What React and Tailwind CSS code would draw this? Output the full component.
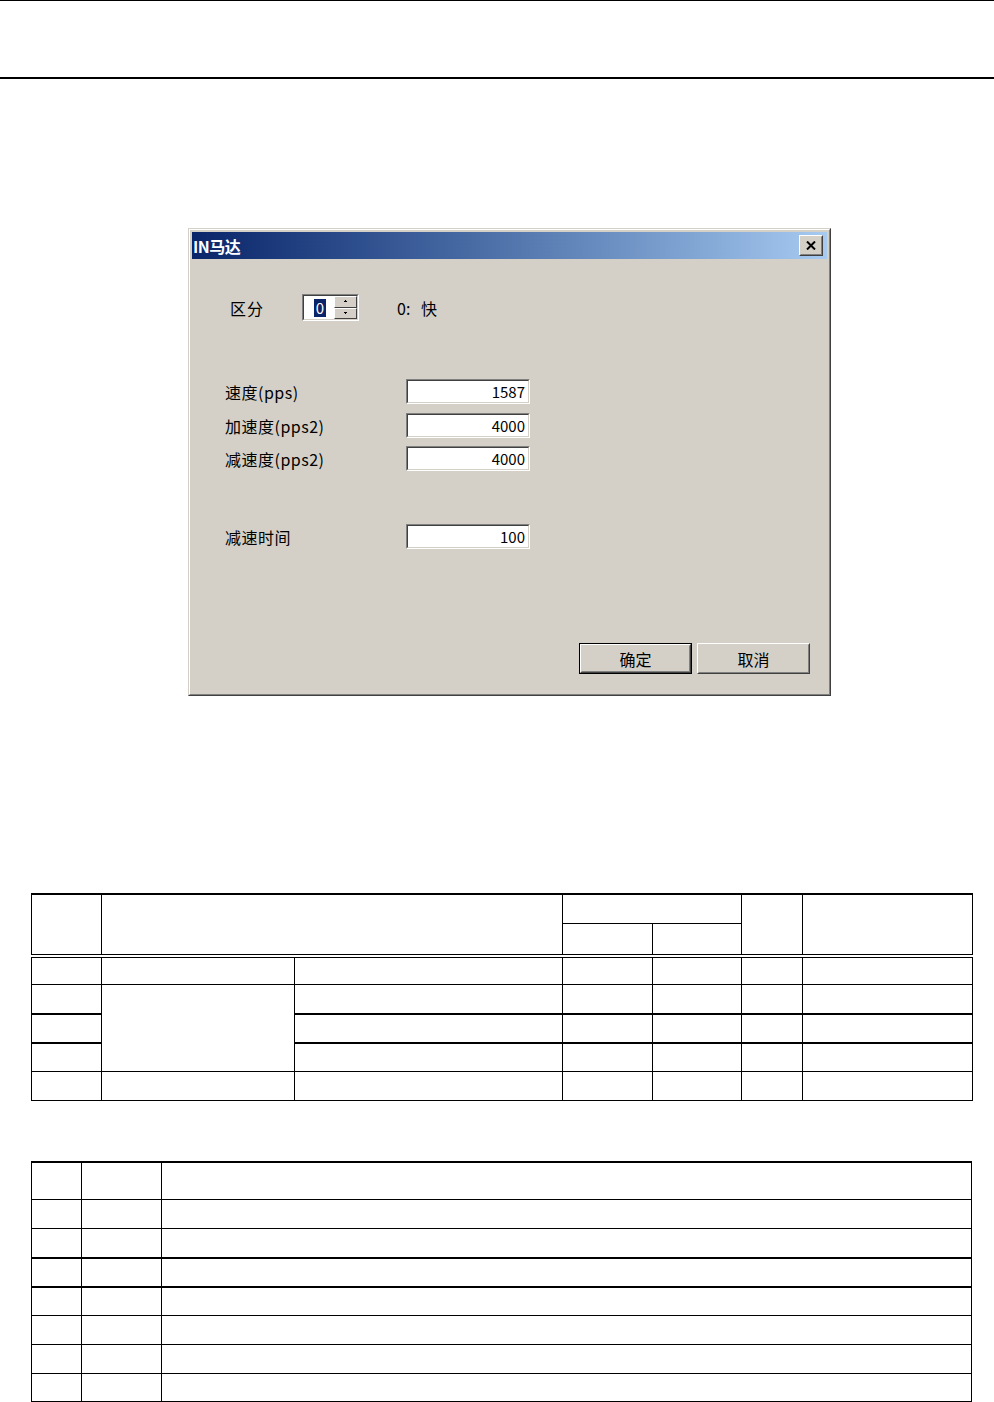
import React from 'react';

const font = { fontFamily: '"Noto Sans CJK SC", "Liberation Sans", sans-serif' };

// Windows classic sunken field
const Sunken = ({ className = '', children }) => (
  <div className={`border border-t-[#808080] border-l-[#808080] border-b-white border-r-white ${className}`}>
    <div className="h-full border border-t-[#404040] border-l-[#404040] border-b-[#d4d0c8] border-r-[#d4d0c8] bg-white">
      {children}
    </div>
  </div>
);

const Field = ({ label, value, className = '' }) => (
  <div className={`flex items-center ${className}`}>
    <span className="w-[181px] text-[16px] leading-none text-black tracking-[0.5px]">{label}</span>
    <Sunken className="w-[124px] h-[25px]">
      <div className="h-full flex items-center justify-end pr-[3px] text-[15px] leading-none text-black">{value}</div>
    </Sunken>
  </div>
);

const Button = ({ label, isDefault }) => (
  <div className={`w-[113px] h-[31px] ${isDefault ? 'border border-black' : ''}`}>
    <div className="h-full border border-t-white border-l-white border-r-[#404040] border-b-[#404040]">
      <div className="h-full border border-t-[#d4d0c8] border-l-[#d4d0c8] border-r-[#808080] border-b-[#808080] flex items-center justify-center text-[16px] leading-none text-black">
        {label}
      </div>
    </div>
  </div>
);

const SpinButton = ({ up }) => (
  <div className="flex-1 border border-t-white border-l-white border-r-[#404040] border-b-[#404040] bg-[#d4d0c8] flex items-center justify-center">
    <svg width="5" height="3" viewBox="0 0 5 3">
      {up ? <path d="M2 0h1v1h1v1H1V1h1z" fill="#000" /> : <path d="M1 0h3v1H3v1H2V1H1z" fill="#000" />}
    </svg>
  </div>
);

const Dialog = () => (
  <div className="ml-[188px] mt-[149px] w-[643px] h-[468px] border border-t-[#d4d0c8] border-l-[#d4d0c8] border-r-[#404040] border-b-[#404040]" style={font}>
    <div className="h-full border border-t-white border-l-white border-r-[#808080] border-b-[#808080] bg-[#d4d0c8] p-[2px] flex flex-col">
      {/* title bar */}
      <div className="h-[27px] flex items-center justify-between bg-gradient-to-r from-[#0a246a] to-[#a6caf0] pl-[1px] pr-[4px]">
        <span className="text-white font-bold text-[16px] leading-none tracking-[-0.5px]">IN马达</span>
        <div className="w-[24px] h-[21px] border border-t-white border-l-white border-r-[#404040] border-b-[#404040]">
          <div className="h-full border border-t-[#d4d0c8] border-l-[#d4d0c8] border-r-[#808080] border-b-[#808080] bg-[#d4d0c8] flex items-center justify-center">
            <svg width="10" height="9" viewBox="0 0 10 9">
              <path d="M1 0.5 L9 8.5 M9 0.5 L1 8.5" stroke="#000" strokeWidth="2" />
            </svg>
          </div>
        </div>
      </div>

      {/* body */}
      <div className="flex-1 flex flex-col">
        <div className="flex items-center mt-[35px] pl-[38px]">
          <span className="w-[72px] text-[16px] leading-none text-black tracking-[1px]">区分</span>
          <Sunken className="w-[57px] h-[27px]">
            <div className="h-full flex">
              <div className="flex-1 flex items-center justify-center pl-[2px]">
                <span className="bg-[#0a246a] text-white text-[15px] leading-[18px] px-[2px]">0</span>
              </div>
              <div className="w-[23px] flex flex-col">
                <SpinButton up />
                <SpinButton />
              </div>
            </div>
          </Sunken>
          <span className="ml-[38px] text-[16px] leading-none text-black">0:&nbsp;&nbsp;&nbsp;快</span>
        </div>

        <div className="pl-[33px] mt-[58px] flex flex-col">
          <Field label="速度(pps)" value="1587" />
          <Field label="加速度(pps2)" value="4000" className="mt-[9px]" />
          <Field label="减速度(pps2)" value="4000" className="mt-[8px]" />
          <Field label="减速时间" value="100" className="mt-[53px]" />
        </div>

        <div className="mt-auto flex justify-end gap-[5px] pr-[17px] pb-[18px]">
          <Button label="确定" isDefault />
          <Button label="取消" />
        </div>
      </div>
    </div>
  </div>
);

const td = 'border border-black p-0';

const SpecTable = () => (
  <table className="ml-[31px] mt-[197px] w-[941px] border-collapse table-fixed border-t-2 border-black">
    <colgroup>
      <col className="w-[70px]" />
      <col className="w-[193px]" />
      <col className="w-[268px]" />
      <col className="w-[90px]" />
      <col className="w-[89px]" />
      <col className="w-[61px]" />
      <col className="w-[170px]" />
    </colgroup>
    <tbody>
      <tr className="h-[29px]">
        <td rowSpan={2} className={`${td} border-t-2 border-b-4 border-double`} />
        <td rowSpan={2} colSpan={2} className={`${td} border-t-2 border-b-4 border-double`} />
        <td colSpan={2} className={`${td} border-t-2`} />
        <td rowSpan={2} className={`${td} border-t-2 border-b-4 border-double`} />
        <td rowSpan={2} className={`${td} border-t-2 border-b-4 border-double`} />
      </tr>
      <tr className="h-[33px]">
        <td className={`${td} border-b-4 border-double`} />
        <td className={`${td} border-b-4 border-double`} />
      </tr>
      <tr className="h-[28px]">
        {[0, 1, 2, 3, 4, 5, 6].map(i => <td key={i} className={td} />)}
      </tr>
      <tr className="h-[30px]">
        <td className={td} />
        <td rowSpan={3} className={td} />
        {[0, 1, 2, 3, 4].map(i => <td key={i} className={td} />)}
      </tr>
      <tr className="h-[29px]">
        <td className={`${td} border-t-2`} />
        {[0, 1, 2, 3, 4].map(i => <td key={i} className={`${td} border-t-2`} />)}
      </tr>
      <tr className="h-[28px]">
        <td className={`${td} border-t-2`} />
        {[0, 1, 2, 3, 4].map(i => <td key={i} className={`${td} border-t-2`} />)}
      </tr>
      <tr className="h-[29px]">
        {[0, 1, 2, 3, 4, 5, 6].map(i => <td key={i} className={td} />)}
      </tr>
    </tbody>
  </table>
);

const rows2 = [
  { h: 'h-[38px]', thick: true },
  { h: 'h-[29px]' },
  { h: 'h-[29px]' },
  { h: 'h-[29px]', thick: true },
  { h: 'h-[29px]', thick: true },
  { h: 'h-[29px]' },
  { h: 'h-[29px]' },
  { h: 'h-[28px]', last: true },
];

const CodeTable = () => (
  <table className="ml-[31px] mt-[60px] w-[941px] border-collapse table-fixed">
    <colgroup>
      <col className="w-[50px]" />
      <col className="w-[80px]" />
      <col />
    </colgroup>
    <tbody>
      {rows2.map((r, i) => (
        <tr key={i} className={r.h}>
          {[0, 1, 2].map(j => (
            <td
              key={j}
              className={`${td} ${r.thick ? 'border-t-2' : ''} ${r.last ? 'border-b-2' : ''}`}
            />
          ))}
        </tr>
      ))}
    </tbody>
  </table>
);

export default function App() {
  return (
    <div className="w-[994px] h-[1402px] bg-white overflow-hidden">
      {/* page header rules */}
      <div className="h-[79px] border-t border-b-2 border-black" />
      <Dialog />
      <SpecTable />
      <CodeTable />
    </div>
  );
}
